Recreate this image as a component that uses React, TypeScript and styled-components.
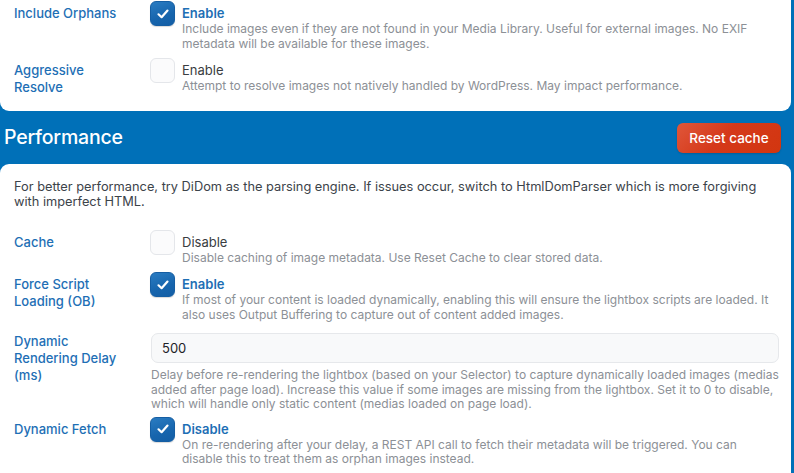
import React from "react";
import styled, { createGlobalStyle } from "styled-components";

const Global = createGlobalStyle`
  html, body { margin: 0; padding: 0; }
  body {
    background: #0070b8;
    font-family: Inter, "Noto Sans", "Liberation Sans", sans-serif;
    -webkit-font-smoothing: antialiased;
    overflow: hidden;
  }
`;

const Page = styled.div`
  width: 791px;
  display: flex;
  flex-direction: column;
`;

const Card = styled.section<{ $top?: boolean }>`
  background: #ffffff;
  border-radius: ${(p) => (p.$top ? "0 0 9px 9px" : "9px 9px 0 0")};
  padding: ${(p) => (p.$top ? "1px 13px 15px 14px" : "15px 13px 20px 14px")};
  display: flex;
  flex-direction: column;
`;

const Header = styled.header`
  height: 53px;
  display: flex;
  align-items: center;
  justify-content: space-between;
  padding: 0 10px 0 4px;
`;

const Title = styled.h2`
  margin: 0;
  color: #ffffff;
  font-size: 19.5px;
  font-weight: 500;
  letter-spacing: -0.2px;
`;

const ResetButton = styled.button`
  width: 104px;
  height: 30px;
  border: none;
  border-radius: 6px;
  background: linear-gradient(135deg, #e0573a 0%, #d5391a 45%, #d2360f 100%);
  color: #ffffff;
  font-family: inherit;
  font-size: 13.5px;
  font-weight: 500;
  box-shadow: 0 1px 2px rgba(0, 0, 0, 0.15);
  margin-top: 1px;
`;

const Intro = styled.p`
  margin: 0 0 21px 0;
  max-width: 752px;
  color: #3c434a;
  font-size: 12.8px;
  line-height: 15px;
`;

const Row = styled.div<{ $gap: number }>`
  display: grid;
  grid-template-columns: 136px 1fr;
  margin-bottom: ${(p) => p.$gap}px;
`;

const Label = styled.div<{ $pt: number }>`
  padding-top: ${(p) => p.$pt}px;
  color: #1e6fb5;
  font-size: 13px;
  font-weight: 500;
  line-height: 16.8px;
`;

const Option = styled.div`
  display: flex;
  gap: 7px;
  align-items: flex-start;
`;

const Box = styled.span<{ $on: boolean }>`
  flex: none;
  width: 25px;
  height: 25px;
  box-sizing: border-box;
  border-radius: 6px;
  display: flex;
  align-items: center;
  justify-content: center;
  background: ${(p) =>
    p.$on ? "linear-gradient(160deg, #2a7cc2 0%, #1765ad 60%, #135ea5 100%)" : "#fbfbfc"};
  border: ${(p) => (p.$on ? "1px solid #155ea3" : "1.5px solid #e4e6ea")};
  box-shadow: ${(p) => (p.$on ? "0 1px 1px rgba(0,0,0,0.15)" : "none")};
`;

const OptText = styled.div`
  padding-top: 4px;
  display: flex;
  flex-direction: column;
`;

const OptTitle = styled.div<{ $on: boolean }>`
  font-size: 13px;
  line-height: 16px;
  font-weight: ${(p) => (p.$on ? 600 : 400)};
  color: ${(p) => (p.$on ? "#1e6fb5" : "#3a3d42")};
  margin-bottom: 1px;
`;

const Desc = styled.div`
  font-size: 12px;
  line-height: 14.5px;
  color: #8c9096;
`;

const Field = styled.div`
  display: flex;
  flex-direction: column;
  gap: 5px;
`;

const Input = styled.input`
  box-sizing: border-box;
  width: 628px;
  height: 30px;
  margin-left: 1px;
  border: 1px solid #e6e8eb;
  border-radius: 7px;
  background: #f8f9fa;
  padding: 0 10px;
  font-family: inherit;
  font-size: 13px;
  color: #1d2327;
  outline: none;
`;

const FieldDesc = styled(Desc)`
  padding-left: 1px;
`;

const Check = () => (
  <svg width="14" height="14" viewBox="0 0 14 14" fill="none">
    <path d="M2.5 7.3 L5.6 10.2 L11.5 3.6" stroke="#fff" strokeWidth="2.2" strokeLinecap="round" strokeLinejoin="round" />
  </svg>
);

type CheckRowProps = {
  label: React.ReactNode;
  on: boolean;
  title: string;
  desc: React.ReactNode;
  gap: number;
};

const CheckRow = ({ label, on, title, desc, gap }: CheckRowProps) => (
  <Row $gap={gap}>
    <Label $pt={4}>{label}</Label>
    <Option>
      <Box $on={on}>{on && <Check />}</Box>
      <OptText>
        <OptTitle $on={on}>{title}</OptTitle>
        <Desc>{desc}</Desc>
      </OptText>
    </Option>
  </Row>
);

export default function App() {
  return (
    <>
      <Global />
      <Page>
        <Card $top>
          <CheckRow
            gap={7}
            label="Include Orphans"
            on
            title="Enable"
            desc="Include images even if they are not found in your Media Library. Useful for external images. No EXIF metadata will be available for these images."
          />
          <CheckRow
            gap={0}
            label={<>Aggressive<br />Resolve</>}
            on={false}
            title="Enable"
            desc="Attempt to resolve images not natively handled by WordPress. May impact performance."
          />
        </Card>
        <Header>
          <Title>Performance</Title>
          <ResetButton>Reset cache</ResetButton>
        </Header>
        <Card>
          <Intro>
            For better performance, try DiDom as the parsing engine. If issues occur, switch to HtmlDomParser which is more forgiving with imperfect HTML.
          </Intro>
          <CheckRow
            gap={7}
            label="Cache"
            on={false}
            title="Disable"
            desc="Disable caching of image metadata. Use Reset Cache to clear stored data."
          />
          <CheckRow
            gap={11}
            label={<>Force Script<br />Loading (OB)</>}
            on
            title="Enable"
            desc="If most of your content is loaded dynamically, enabling this will ensure the lightbox scripts are loaded. It also uses Output Buffering to capture out of content added images."
          />
          <Row $gap={5}>
            <Label $pt={0}>Dynamic<br />Rendering Delay<br />(ms)</Label>
            <Field>
              <Input defaultValue="500" />
              <FieldDesc>
                Delay before re-rendering the lightbox (based on your Selector) to capture dynamically loaded images (medias added after page load). Increase this value if some images are missing from the lightbox. Set it to 0 to disable, which will handle only static content (medias loaded on page load).
              </FieldDesc>
            </Field>
          </Row>
          <CheckRow
            gap={0}
            label="Dynamic Fetch"
            on
            title="Disable"
            desc="On re-rendering after your delay, a REST API call to fetch their metadata will be triggered. You can disable this to treat them as orphan images instead."
          />
        </Card>
      </Page>
    </>
  );
}
